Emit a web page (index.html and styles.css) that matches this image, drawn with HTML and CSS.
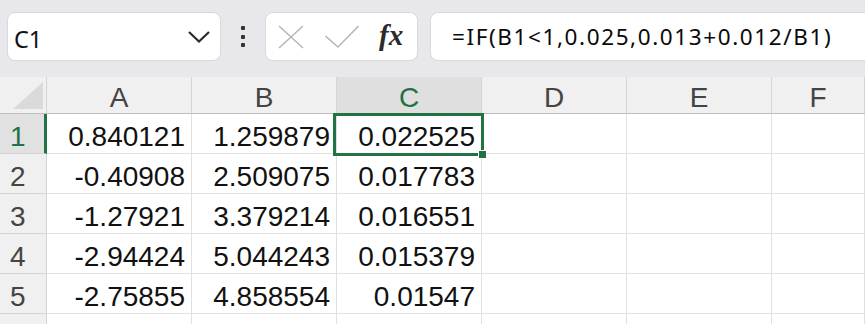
FILE: index.html
```html
<!DOCTYPE html>
<html lang="en">
<head>
    <meta charset="UTF-8">
    <meta name="viewport" content="width=device-width, initial-scale=1.0">
    <title>Sheet</title>
    <link rel="stylesheet" href="styles.css">
</head>
<body>
    <div class="toolbar">
        <div class="name-box">
            <span>C1</span>
            <svg class="chevron" width="22" height="12" viewBox="0 0 22 12">
                <polyline points="1,1 11,10.5 21,1" fill="none" stroke="#2b2b2b" stroke-width="2.2"/>
            </svg>
        </div>
        <div class="dots">
            <i></i><i></i><i></i>
        </div>
        <div class="btn-group">
            <svg class="icon-x" width="26" height="24" viewBox="0 0 26 24">
                <line x1="1" y1="1" x2="25" y2="23" stroke="#b8b8b8" stroke-width="1.6"/>
                <line x1="25" y1="1" x2="1" y2="23" stroke="#b8b8b8" stroke-width="1.6"/>
            </svg>
            <svg class="icon-check" width="34" height="24" viewBox="0 0 34 24">
                <polyline points="0.5,11 13,22 33.5,1" fill="none" stroke="#b8b8b8" stroke-width="1.6"/>
            </svg>
            <span class="fx">fx</span>
        </div>
        <div class="formula-box">=IF(B1&lt;1,0.025,0.013+0.012/B1)</div>
    </div>

    <div class="sheet">
        <div class="corner">
            <svg width="30" height="27" viewBox="0 0 30 27"><polygon points="30,0 30,27 0,27" fill="#dadada"/></svg>
        </div>
        <div class="col-head">A</div>
        <div class="col-head">B</div>
        <div class="col-head active">C</div>
        <div class="col-head">D</div>
        <div class="col-head">E</div>
        <div class="col-head">F</div>

        <div class="row-head active">1</div>
        <div class="cell">0.840121</div>
        <div class="cell">1.259879</div>
        <div class="cell selected">0.022525<div class="selection"><span class="handle"></span></div></div>
        <div class="cell"></div>
        <div class="cell"></div>
        <div class="cell"></div>

        <div class="row-head">2</div>
        <div class="cell">-0.40908</div>
        <div class="cell">2.509075</div>
        <div class="cell">0.017783</div>
        <div class="cell"></div>
        <div class="cell"></div>
        <div class="cell"></div>

        <div class="row-head">3</div>
        <div class="cell">-1.27921</div>
        <div class="cell">3.379214</div>
        <div class="cell">0.016551</div>
        <div class="cell"></div>
        <div class="cell"></div>
        <div class="cell"></div>

        <div class="row-head">4</div>
        <div class="cell">-2.94424</div>
        <div class="cell">5.044243</div>
        <div class="cell">0.015379</div>
        <div class="cell"></div>
        <div class="cell"></div>
        <div class="cell"></div>

        <div class="row-head">5</div>
        <div class="cell">-2.75855</div>
        <div class="cell">4.858554</div>
        <div class="cell">0.01547</div>
        <div class="cell"></div>
        <div class="cell"></div>
        <div class="cell"></div>

        <!-- row 6 is only partly visible -->
        <div class="row-head"></div>
        <div class="cell"></div>
        <div class="cell"></div>
        <div class="cell"></div>
        <div class="cell"></div>
        <div class="cell"></div>
        <div class="cell"></div>
    </div>
</body>
</html>
```

FILE: styles.css
```css
:root {
    --green: #217346;
    --toolbar-bg: #e8e8ec;
    --head-bg: #f0f0f0;
    --grid-line: #e1e1e1;
    --head-line: #d4d4d4;
}

* {
    box-sizing: border-box;
}

body {
    margin: 0;
    width: 865px;
    height: 324px;
    overflow: hidden;
    font-family: 'Liberation Sans', Arial, sans-serif;
    background-color: white;
}

/* Formula bar */
.toolbar {
    height: 77px;
    background-color: var(--toolbar-bg);
    display: flex;
    align-items: flex-start;
    padding: 12px 0 0 7px;
}

.name-box,
.btn-group,
.formula-box {
    height: 49px;
    background-color: white;
    border: 1px solid #d9d9dc;
    border-radius: 8px;
    display: flex;
    align-items: center;
}

.name-box {
    width: 214px;
    justify-content: space-between;
    padding: 5px 10px 0 6px;
    font-family: 'Noto Sans', sans-serif;
    font-size: 23.5px;
    color: #111;
}

.name-box .chevron {
    margin-top: -4px;
}

.dots {
    width: 44px;
    display: flex;
    flex-direction: column;
    align-items: center;
    gap: 4.7px;
    padding-top: 14px;
}

.dots i {
    width: 4px;
    height: 4px;
    border-radius: 1px;
    background-color: #333;
}

.btn-group {
    width: 153px;
    padding-left: 12px;
}

.icon-check {
    margin-left: 21px;
}

.fx {
    margin-left: 20px;
    margin-top: -2px;
    font-family: 'Liberation Serif', 'Times New Roman', serif;
    font-style: italic;
    font-weight: bold;
    font-size: 29px;
    color: #2a2a2a;
}

.formula-box {
    flex: 1;
    margin-left: 12px;
    margin-right: -12px;
    padding: 0 0 1px 21px;
    font-family: 'Noto Sans', sans-serif;
    font-size: 22.5px;
    letter-spacing: 1.6px;
    color: #0a0a0a;
}

/* Sheet grid */
.sheet {
    display: grid;
    grid-template-columns: 47px repeat(5, 145px) 1fr;
    grid-template-rows: 37px repeat(6, 40px);
    font-size: 28px;
}

.corner,
.col-head {
    background-color: var(--head-bg);
    border-right: 1px solid var(--head-line);
    border-bottom: 1px solid #bdbdbd;
}

.corner {
    display: flex;
    justify-content: flex-end;
    align-items: flex-end;
    padding: 0 3px 4px 0;
}

.col-head {
    text-align: center;
    color: #444;
    padding-top: 6px;
    line-height: 30px;
}

.col-head.active {
    background-color: #dfdfdf;
    color: var(--green);
}

.row-head {
    background-color: var(--head-bg);
    border-right: 1px solid var(--head-line);
    border-bottom: 1px solid var(--head-line);
    color: #444;
    padding: 6px 0 0 10px;
    line-height: 34px;
}

.row-head.active {
    background-color: #e1e1e1;
    color: var(--green);
    border-right: 3px solid var(--green);
}

.cell {
    position: relative;
    border-right: 1px solid var(--grid-line);
    border-bottom: 1px solid var(--grid-line);
    text-align: right;
    padding: 6px 6px 0 0;
    line-height: 34px;
    color: #111;
}

.cell.selected {
    z-index: 2;
}

.selection {
    position: absolute;
    top: -1px;
    left: -4px;
    right: -3px;
    bottom: -3px;
    border: 3px solid var(--green);
}

.handle {
    position: absolute;
    right: -6px;
    bottom: -6px;
    width: 9px;
    height: 9px;
    background-color: var(--green);
    border: 1px solid white;
}
```
